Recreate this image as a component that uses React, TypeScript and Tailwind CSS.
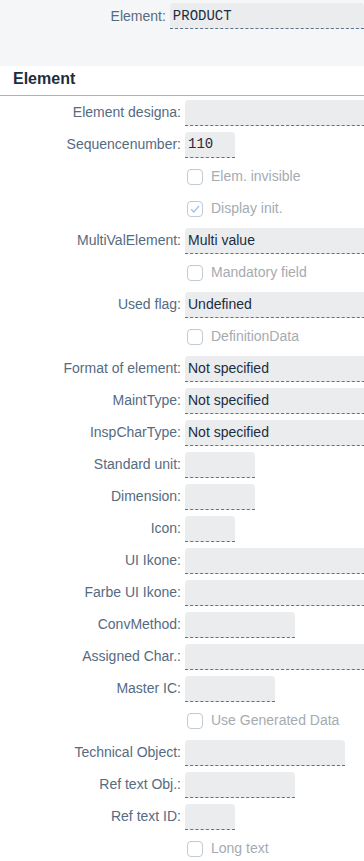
import React from "react";

type Row =
  | { kind: "input"; label: string; value?: string; w?: string; mono?: boolean }
  | { kind: "check"; label: string; checked?: boolean };

const rows: Row[] = [
  { kind: "input", label: "Element designa:" },
  { kind: "input", label: "Sequencenumber:", value: "110", w: "w-[50px]", mono: true },
  { kind: "check", label: "Elem. invisible" },
  { kind: "check", label: "Display init.", checked: true },
  { kind: "input", label: "MultiValElement:", value: "Multi value" },
  { kind: "check", label: "Mandatory field" },
  { kind: "input", label: "Used flag:", value: "Undefined" },
  { kind: "check", label: "DefinitionData" },
  { kind: "input", label: "Format of element:", value: "Not specified" },
  { kind: "input", label: "MaintType:", value: "Not specified" },
  { kind: "input", label: "InspCharType:", value: "Not specified" },
  { kind: "input", label: "Standard unit:", w: "w-[70px]" },
  { kind: "input", label: "Dimension:", w: "w-[70px]" },
  { kind: "input", label: "Icon:", w: "w-[50px]" },
  { kind: "input", label: "UI Ikone:" },
  { kind: "input", label: "Farbe UI Ikone:" },
  { kind: "input", label: "ConvMethod:", w: "w-[110px]" },
  { kind: "input", label: "Assigned Char.:" },
  { kind: "input", label: "Master IC:", w: "w-[90px]" },
  { kind: "check", label: "Use Generated Data" },
  { kind: "input", label: "Technical Object:", w: "w-[160px]" },
  { kind: "input", label: "Ref text Obj.:", w: "w-[110px]" },
  { kind: "input", label: "Ref text ID:", w: "w-[50px]" },
  { kind: "check", label: "Long text" },
];

function Field({ value, w, mono }: { value?: string; w?: string; mono?: boolean }) {
  return (
    <div
      className={`${w ?? "w-[190px]"} shrink-0 h-[26px] bg-[#eaecee] rounded-t-[4px] border-b border-dashed border-[#5b738b] flex items-center px-[3px] text-[14px] text-[#1d2d3e] ${
        mono ? "font-['Liberation_Mono',monospace]" : ""
      }`}
    >
      {value}
    </div>
  );
}

export default function App() {
  return (
    <div className="w-[364px] min-h-[861px] overflow-hidden bg-white font-['Liberation_Sans',Arial,sans-serif]">
      <div className="h-[66px] bg-[#f5f6f7] pt-[3px] flex">
        <div className="w-[171px] text-right text-[14px] text-[#556b82] leading-[27px]">Element:</div>
        <div className="ml-[4px] w-[200px] h-[26px] bg-[#eaecee] rounded-t-[4px] border-b border-dashed border-[#5b738b] flex items-center px-[3px] pt-[1px] text-[14px] text-[#1d2d3e] font-['Liberation_Mono',monospace]">
          PRODUCT
        </div>
      </div>

      <div className="h-[30px] border-b border-[#a8b3bd] px-[13px] pt-[1px] text-[16px] font-bold text-[#1d2d3e] leading-[24px]">
        Element
      </div>

      <div className="flex flex-col">
        {rows.map((r, i) => (
          <div key={i} className="h-[32px] flex items-center pt-[1px]">
            <div className="w-[181px] shrink-0 text-right text-[14px] text-[#556b82]">
              {r.kind === "input" ? r.label : ""}
            </div>
            <div className="ml-[4px] flex items-center">
              {r.kind === "input" ? (
                <Field value={r.value} w={r.w} mono={r.mono} />
              ) : (
                <div className="flex items-center gap-[8px] pl-[2px]">
                  <div className="w-[16px] h-[16px] rounded-[4px] border border-[#c3cad1] bg-white flex items-center justify-center">
                    {r.checked && (
                      <svg width="12" height="12" viewBox="0 0 12 12" fill="none">
                        <path d="M2 6.2 L4.8 9 L10 3" stroke="#9ec3f0" strokeWidth="1.3" />
                      </svg>
                    )}
                  </div>
                  <span className="text-[14px] text-[#a5abb2]">{r.label}</span>
                </div>
              )}
            </div>
          </div>
        ))}
      </div>
    </div>
  );
}
